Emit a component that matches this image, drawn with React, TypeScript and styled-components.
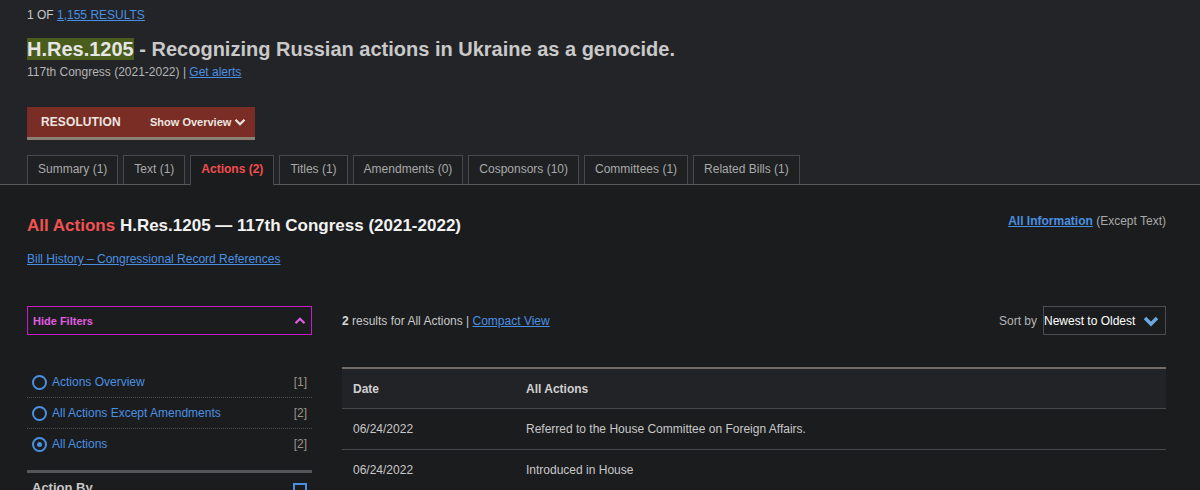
import React from "react";
import styled, { createGlobalStyle } from "styled-components";

const Global = createGlobalStyle`
  html, body { margin: 0; padding: 0; background: #1b1c1e; }
  body { font-family: "Liberation Sans", Arial, sans-serif; color: #c8c8c8; }
  a { color: #4a90e2; }
`;

const Page = styled.div`
  width: 1200px;
  min-height: 490px;
  background: #1b1c1e;
  overflow: hidden;
`;

const Header = styled.header`
  background: #232427;
  border-bottom: 1px solid #58595b;
  padding: 8px 0 0 27px;
`;

const Counter = styled.div`
  font-size: 12px;
  line-height: 14px;
  color: #c8c8c8;
  text-transform: uppercase;
  a { color: #4a90e2; }
`;

const Title = styled.h1`
  margin: 15px 0 0;
  font-size: 20px;
  line-height: 24px;
  font-weight: bold;
  color: #c9c9c9;
`;

const BillNumber = styled.span`
  background: #4b5d1c;
  color: #e6e6e6;
`;

const Subtitle = styled.div`
  font-size: 12px;
  line-height: 14px;
  margin-top: 4px;
  color: #b5b5b5;
  a { color: #4a90e2; }
`;

const TypeBar = styled.div`
  margin-top: 28px;
  width: 214px;
  height: 30px;
  background: #7a2d24;
  border-bottom: 3px solid #8a8172;
  display: flex;
  align-items: center;
  padding-left: 14px;
  box-sizing: content-box;
`;

const TypeLabel = styled.span`
  font-size: 12px;
  font-weight: bold;
  color: #ece6e0;
  letter-spacing: 0.1px;
  width: 109px;
`;

const Overview = styled.span`
  font-size: 11px;
  font-weight: bold;
  color: #ece6e0;
  display: flex;
  align-items: center;
  gap: 3px;
`;

const Tabs = styled.nav`
  margin-top: 15px;
  display: flex;
  gap: 5px;
`;

const Tab = styled.div<{ $active?: boolean }>`
  padding: 0 10px;
  padding-bottom: ${(p) => (p.$active ? "3px" : "2px")};
  display: flex;
  align-items: center;
  font-size: 12px;
  border: 1px solid #48494c;
  border-bottom: none;
  box-sizing: border-box;
  background: ${(p) => (p.$active ? "#1b1c1e" : "#1f2022")};
  color: ${(p) => (p.$active ? "#f24d4d" : "#a9a9a9")};
  font-weight: ${(p) => (p.$active ? "bold" : "normal")};
  margin-bottom: ${(p) => (p.$active ? "-1px" : "0")};
  height: ${(p) => (p.$active ? "30px" : "29px")};
`;

const Body = styled.main`
  padding: 0 34px 0 27px;
`;

const HeadRow = styled.div`
  display: flex;
  justify-content: space-between;
  align-items: flex-start;
  margin-top: 31px;
`;

const Headline = styled.h2`
  margin: 0;
  font-size: 17px;
  line-height: 20px;
  font-weight: bold;
  color: #f2f2f2;
  span { color: #f25252; }
`;

const AllInfo = styled.div`
  font-size: 12px;
  color: #a9a9a9;
  margin-top: -2px;
  a { font-weight: bold; color: #4a90e2; }
`;

const HistoryLink = styled.a`
  display: block;
  margin-top: 16px;
  font-size: 12px;
  line-height: 14px;
`;

const Columns = styled.div`
  display: flex;
  gap: 30px;
  margin-top: 40px;
`;

const Sidebar = styled.aside`
  width: 285px;
  flex: none;
`;

const FilterToggle = styled.div`
  height: 27px;
  border: 1px solid #c81ac8;
  display: flex;
  align-items: center;
  justify-content: space-between;
  padding: 0 5px;
  font-size: 11px;
  font-weight: bold;
  color: #e05ce0;
`;

const RadioList = styled.ul`
  list-style: none;
  margin: 32px 0 0;
  padding: 0;
`;

const RadioItem = styled.li`
  height: 30px;
  display: flex;
  align-items: center;
  justify-content: space-between;
  padding: 0 5px;
  font-size: 12px;
  & + & { border-top: 1px dotted #4e4f52; }
`;

const RadioLabel = styled.span`
  display: flex;
  align-items: center;
  gap: 5px;
  color: #4a90e2;
`;

const Radio = styled.span<{ $checked?: boolean }>`
  width: 11px;
  height: 11px;
  border: 2px solid #4a90e2;
  border-radius: 50%;
  display: inline-flex;
  align-items: center;
  justify-content: center;
  &::after {
    content: "";
    width: 5px;
    height: 5px;
    border-radius: 50%;
    background: ${(p) => (p.$checked ? "#4a90e2" : "transparent")};
  }
`;

const Count = styled.span`
  color: #9b9488;
  font-size: 12px;
`;

const Section = styled.div`
  margin-top: 11px;
  border-top: 3px solid #555659;
  padding: 7px 5px 0;
  display: flex;
  justify-content: space-between;
  font-size: 13px;
  font-weight: bold;
  color: #c8c8c8;
`;

const MinusBox = styled.span`
  width: 10px;
  height: 10px;
  border: 2px solid #4a90e2;
  display: inline-flex;
  align-items: flex-end;
  justify-content: center;
  margin-top: 3px;
  &::after {
    content: "";
    width: 8px;
    height: 3px;
    background: #4a90e2;
    margin-bottom: 1px;
  }
`;

const Results = styled.section`
  flex: 1;
`;

const ResultsBar = styled.div`
  height: 29px;
  display: flex;
  align-items: center;
  justify-content: space-between;
  font-size: 12px;
  color: #c8c8c8;
  b { color: #d8d8d8; }
  a { color: #4a90e2; }
`;

const SortLabel = styled.span`
  display: flex;
  align-items: center;
  gap: 6px;
  color: #b5b5b5;
`;

const Select = styled.div`
  width: 123px;
  height: 29px;
  border: 1px solid #4c4d50;
  display: flex;
  align-items: center;
  justify-content: space-between;
  padding: 0 6px 0 0;
  box-sizing: border-box;
  color: #ffffff;
  font-size: 12px;
`;

const Table = styled.table`
  width: 100%;
  margin-top: 32px;
  border-collapse: collapse;
  font-size: 12px;
  border-top: 2px solid #716d66;
`;

const Th = styled.th<{ $w?: number }>`
  text-align: left;
  height: 39px;
  padding: 0 11px;
  background: #222326;
  color: #d0d0d0;
  font-weight: bold;
  width: ${(p) => (p.$w ? `${p.$w}px` : "auto")};
  border-bottom: 1px solid #47484b;
`;

const Td = styled.td`
  height: 40px;
  padding: 0 11px;
  color: #c8c8c8;
  border-bottom: 1px solid #47484b;
`;

const Chevron = ({
  up,
  color,
  size,
  weight = 3,
}: {
  up?: boolean;
  color: string;
  size: number;
  weight?: number;
}) => (
  <svg width={size} height={size} viewBox="0 0 16 16" aria-hidden="true">
    <path
      d={up ? "M2 11 L8 5 L14 11" : "M2 5 L8 11 L14 5"}
      fill="none"
      stroke={color}
      strokeWidth={weight}
      strokeLinejoin="miter"
    />
  </svg>
);

const tabs = [
  "Summary (1)",
  "Text (1)",
  "Actions (2)",
  "Titles (1)",
  "Amendments (0)",
  "Cosponsors (10)",
  "Committees (1)",
  "Related Bills (1)",
];

const filters = [
  { label: "Actions Overview", count: 1, checked: false },
  { label: "All Actions Except Amendments", count: 2, checked: false },
  { label: "All Actions", count: 2, checked: true },
];

const actions = [
  { date: "06/24/2022", text: "Referred to the House Committee on Foreign Affairs." },
  { date: "06/24/2022", text: "Introduced in House" },
];

export default function App() {
  return (
    <Page>
      <Global />
      <Header>
        <Counter>
          1 OF <a href="#">1,155 RESULTS</a>
        </Counter>
        <Title>
          <BillNumber>H.Res.1205</BillNumber> - Recognizing Russian actions in Ukraine as a genocide.
        </Title>
        <Subtitle>
          117th Congress (2021-2022) | <a href="#">Get alerts</a>
        </Subtitle>
        <TypeBar>
          <TypeLabel>RESOLUTION</TypeLabel>
          <Overview>
            Show Overview <Chevron color="#ece6e0" size={12} />
          </Overview>
        </TypeBar>
        <Tabs>
          {tabs.map((t) => (
            <Tab key={t} $active={t.startsWith("Actions")}>
              {t}
            </Tab>
          ))}
        </Tabs>
      </Header>
      <Body>
        <HeadRow>
          <Headline>
            <span>All Actions</span> H.Res.1205 — 117th Congress (2021-2022)
          </Headline>
          <AllInfo>
            <a href="#">All Information</a> (Except Text)
          </AllInfo>
        </HeadRow>
        <HistoryLink href="#">Bill History – Congressional Record References</HistoryLink>
        <Columns>
          <Sidebar>
            <FilterToggle>
              Hide Filters <Chevron up color="#e05ce0" size={12} />
            </FilterToggle>
            <RadioList>
              {filters.map((f) => (
                <RadioItem key={f.label}>
                  <RadioLabel>
                    <Radio $checked={f.checked} />
                    {f.label}
                  </RadioLabel>
                  <Count>[{f.count}]</Count>
                </RadioItem>
              ))}
            </RadioList>
            <Section>
              Action By
              <MinusBox />
            </Section>
          </Sidebar>
          <Results>
            <ResultsBar>
              <span>
                <b>2</b> results for All Actions | <a href="#">Compact View</a>
              </span>
              <SortLabel>
                Sort by
                <Select>
                  Newest to Oldest <Chevron color="#6aa8e0" size={16} weight={3.5} />
                </Select>
              </SortLabel>
            </ResultsBar>
            <Table>
              <thead>
                <tr>
                  <Th $w={151}>Date</Th>
                  <Th>All Actions</Th>
                </tr>
              </thead>
              <tbody>
                {actions.map((a, i) => (
                  <tr key={i}>
                    <Td>{a.date}</Td>
                    <Td>{a.text}</Td>
                  </tr>
                ))}
              </tbody>
            </Table>
          </Results>
        </Columns>
      </Body>
    </Page>
  );
}
